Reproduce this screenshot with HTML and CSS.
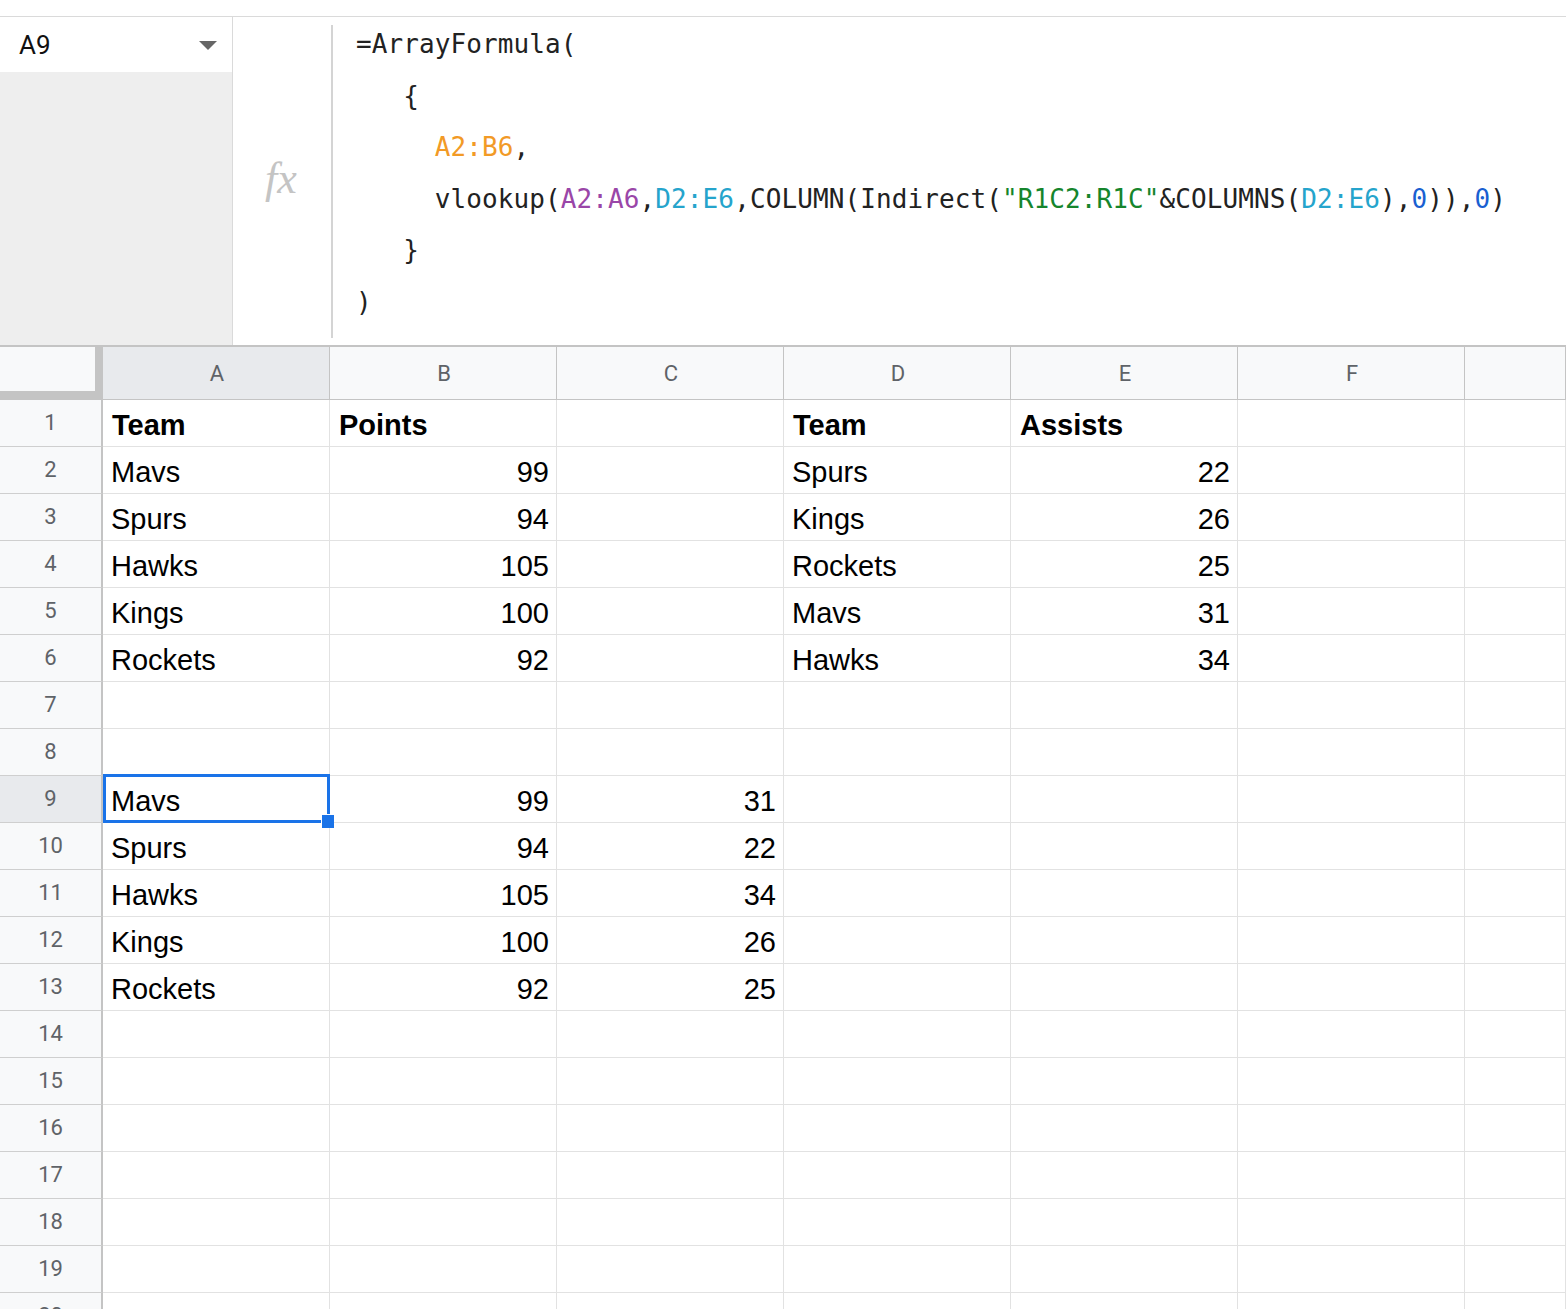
FILE: index.html
```html
<!DOCTYPE html>
<html lang="en">

<head>
	<meta charset="UTF-8">
	<title>Sheet</title>
	<link rel="stylesheet" href="styles.css">
</head>

<body>
	<div class="topgap"></div>
	<div class="fbar">
		<div class="namecol">
			<div class="namebox"><span>A9</span><i class="caret"></i></div>
		</div>
		<div class="fx"><span>fx</span></div>
		<div class="fdiv"></div>
		<div class="formula">=ArrayFormula(
   {
     <span class="c-or">A2:B6</span>,
     vlookup(<span class="c-pu">A2:A6</span>,<span class="c-te">D2:E6</span>,COLUMN(Indirect(<span class="c-gr">"R1C2:R1C"</span>&amp;COLUMNS(<span class="c-te">D2:E6</span>),<span class="c-bl">0</span>)),<span class="c-bl">0</span>)
   }
)</div>
	</div>

	<div class="sheet">
		<div class="corner"></div>
		<div class="ch sel-h">A</div>
		<div class="ch">B</div>
		<div class="ch">C</div>
		<div class="ch">D</div>
		<div class="ch">E</div>
		<div class="ch">F</div>
		<div class="ch"></div>

		<div class="rh">1</div><div class="c b">Team</div><div class="c b">Points</div><div class="c"></div><div class="c b">Team</div><div class="c b">Assists</div><div class="c"></div><div class="c"></div>
		<div class="rh">2</div><div class="c">Mavs</div><div class="c n">99</div><div class="c"></div><div class="c">Spurs</div><div class="c n">22</div><div class="c"></div><div class="c"></div>
		<div class="rh">3</div><div class="c">Spurs</div><div class="c n">94</div><div class="c"></div><div class="c">Kings</div><div class="c n">26</div><div class="c"></div><div class="c"></div>
		<div class="rh">4</div><div class="c">Hawks</div><div class="c n">105</div><div class="c"></div><div class="c">Rockets</div><div class="c n">25</div><div class="c"></div><div class="c"></div>
		<div class="rh">5</div><div class="c">Kings</div><div class="c n">100</div><div class="c"></div><div class="c">Mavs</div><div class="c n">31</div><div class="c"></div><div class="c"></div>
		<div class="rh">6</div><div class="c">Rockets</div><div class="c n">92</div><div class="c"></div><div class="c">Hawks</div><div class="c n">34</div><div class="c"></div><div class="c"></div>
		<div class="rh">7</div><div class="c"></div><div class="c"></div><div class="c"></div><div class="c"></div><div class="c"></div><div class="c"></div><div class="c"></div>
		<div class="rh">8</div><div class="c"></div><div class="c"></div><div class="c"></div><div class="c"></div><div class="c"></div><div class="c"></div><div class="c"></div>
		<div class="rh sel-h">9</div><div class="c active">Mavs<div class="selbox"></div><div class="handle"></div></div><div class="c n">99</div><div class="c n">31</div><div class="c"></div><div class="c"></div><div class="c"></div><div class="c"></div>
		<div class="rh">10</div><div class="c">Spurs</div><div class="c n">94</div><div class="c n">22</div><div class="c"></div><div class="c"></div><div class="c"></div><div class="c"></div>
		<div class="rh">11</div><div class="c">Hawks</div><div class="c n">105</div><div class="c n">34</div><div class="c"></div><div class="c"></div><div class="c"></div><div class="c"></div>
		<div class="rh">12</div><div class="c">Kings</div><div class="c n">100</div><div class="c n">26</div><div class="c"></div><div class="c"></div><div class="c"></div><div class="c"></div>
		<div class="rh">13</div><div class="c">Rockets</div><div class="c n">92</div><div class="c n">25</div><div class="c"></div><div class="c"></div><div class="c"></div><div class="c"></div>
		<div class="rh">14</div><div class="c"></div><div class="c"></div><div class="c"></div><div class="c"></div><div class="c"></div><div class="c"></div><div class="c"></div>
		<div class="rh">15</div><div class="c"></div><div class="c"></div><div class="c"></div><div class="c"></div><div class="c"></div><div class="c"></div><div class="c"></div>
		<div class="rh">16</div><div class="c"></div><div class="c"></div><div class="c"></div><div class="c"></div><div class="c"></div><div class="c"></div><div class="c"></div>
		<div class="rh">17</div><div class="c"></div><div class="c"></div><div class="c"></div><div class="c"></div><div class="c"></div><div class="c"></div><div class="c"></div>
		<div class="rh">18</div><div class="c"></div><div class="c"></div><div class="c"></div><div class="c"></div><div class="c"></div><div class="c"></div><div class="c"></div>
		<div class="rh">19</div><div class="c"></div><div class="c"></div><div class="c"></div><div class="c"></div><div class="c"></div><div class="c"></div><div class="c"></div>
		<div class="rh">20</div><div class="c"></div><div class="c"></div><div class="c"></div><div class="c"></div><div class="c"></div><div class="c"></div><div class="c"></div>
	</div>
</body>

</html>
```

FILE: styles.css
```css
html,
body {
	margin: 0;
	overflow: hidden;
	background: #fff;
}

body {
	width: 1566px;
	height: 1309px;
	font-family: 'Liberation Sans', Arial, sans-serif;
}

.topgap {
	height: 16px;
	border-bottom: 1px solid #dadada;
}

/* formula bar */
.fbar {
	display: flex;
	height: 328px;
}

.namecol {
	width: 232px;
	background: #eeeeee;
	border-right: 1px solid #dadada;
}

.namebox {
	height: 55px;
	background: #fff;
	display: flex;
	align-items: center;
	justify-content: space-between;
	padding: 0 15px 0 19px;
	font-family: Roboto, 'Liberation Sans', sans-serif;
	font-size: 26px;
	color: #111;
}

.caret {
	width: 0;
	height: 0;
	border-left: 9px solid transparent;
	border-right: 9px solid transparent;
	border-top: 9px solid #666;
	margin-top: 2px;
}

.fx {
	width: 98px;
	display: flex;
	align-items: center;
	justify-content: center;
}

.fx span {
	font-family: 'Liberation Serif', serif;
	font-style: italic;
	font-size: 44px;
	color: #c4c4c4;
	margin: 0 2px 6px 0;
}

.fdiv {
	width: 2px;
	background: #d4d4d4;
	margin: 8px 0 7px;
}

.formula {
	flex: 1;
	padding: 2px 0 0 23px;
	font-family: 'DejaVu Sans Mono', monospace;
	font-size: 26px;
	letter-spacing: 0.1px;
	line-height: 51.6px;
	white-space: pre;
	color: #222;
}

.c-or { color: #f29a26; }
.c-pu { color: #9a46a8; }
.c-te { color: #25a4cc; }
.c-gr { color: #15852c; }
.c-bl { color: #1a5fd1; }

/* grid */
.sheet {
	display: grid;
	grid-template-columns: 103px repeat(6, 227px) 1fr;
	grid-template-rows: 53px;
	grid-auto-rows: 47px;
	border-top: 2px solid #c4c4c4;
}

.corner {
	background: #f8f9fa;
	border-right: 8px solid #c4c4c4;
	border-bottom: 9px solid #c4c4c4;
}

.ch {
	background: #f8f9fa;
	border-right: 1px solid #c4c4c4;
	border-bottom: 1px solid #c4c4c4;
	display: flex;
	align-items: center;
	justify-content: center;
	padding-top: 1px;
	padding-left: 2px;
	font-family: Roboto, sans-serif;
	font-size: 22px;
	color: #5f6368;
}

.rh {
	background: #f8f9fa;
	border-right: 2px solid #c4c4c4;
	border-bottom: 1px solid #cfcfcf;
	display: flex;
	align-items: center;
	justify-content: center;
	padding-bottom: 2px;
	font-family: Roboto, sans-serif;
	font-size: 22px;
	color: #5f6368;
}

.sel-h {
	background: #e8eaed;
}

.c {
	border-right: 1px solid #e2e2e2;
	border-bottom: 1px solid #e2e2e2;
	padding: 2px 8px 0;
	font-size: 29px;
	line-height: 46px;
	color: #000;
	white-space: nowrap;
}

.c.b {
	font-weight: bold;
	padding-left: 9px;
}

.c.n {
	text-align: right;
	padding-right: 7px;
}

.active {
	position: relative;
}

.selbox {
	position: absolute;
	left: 0;
	top: -2px;
	right: -1px;
	bottom: -1px;
	border: 3px solid #1a73e8;
}

.handle {
	position: absolute;
	right: -5px;
	bottom: -6px;
	width: 13px;
	height: 14px;
	background: #1a73e8;
	border-left: 1px solid #fff;
	border-top: 1px solid #fff;
	box-sizing: border-box;
}
```
